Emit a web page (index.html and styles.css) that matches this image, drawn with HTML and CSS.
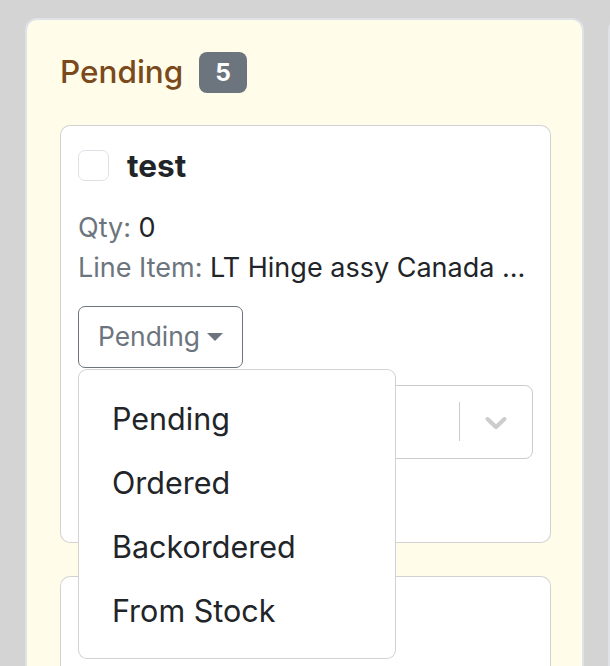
FILE: index.html
```html
<!DOCTYPE html>
<html lang="en">
<head>
    <meta charset="UTF-8">
    <meta name="viewport" content="width=device-width, initial-scale=1.0">
    <title>Parts Board</title>
    <link rel="stylesheet" href="styles.css">
</head>
<body>
    <div class="board">
        <div class="column">
            <h5 class="column-title">Pending <span class="badge">5</span></h5>

            <div class="card">
                <div class="card-title">
                    <input type="checkbox" class="check">
                    <span>test</span>
                </div>
                <div class="info"><span class="muted">Qty:</span> 0</div>
                <div class="info"><span class="muted">Line Item:</span> LT Hinge assy Canada ...</div>

                <div class="dropdown">
                    <button type="button" class="btn-status">Pending<span class="caret"></span></button>
                    <ul class="dropdown-menu">
                        <li>Pending</li>
                        <li>Ordered</li>
                        <li>Backordered</li>
                        <li>From Stock</li>
                    </ul>
                </div>

                <div class="select">
                    <div class="select-value"></div>
                    <span class="select-sep"></span>
                    <div class="select-arrow">
                        <svg viewBox="0 0 20 20" width="36" height="36"><path d="M4.516 7.548c0.436-0.446 1.043-0.481 1.576 0l3.908 3.747 3.908-3.747c0.533-0.481 1.141-0.446 1.574 0 0.436 0.445 0.408 1.197 0 1.615-0.406 0.418-4.695 4.502-4.695 4.502-0.217 0.223-0.502 0.335-0.787 0.335s-0.57-0.112-0.789-0.335c0 0-4.287-4.084-4.695-4.502s-0.436-1.17 0-1.615z"></path></svg>
                    </div>
                </div>
            </div>

            <div class="card card-next">
                <div class="card-title">
                    <input type="checkbox" class="check">
                </div>
            </div>
        </div>

        <div class="column"></div>
    </div>
</body>
</html>
```

FILE: styles.css
```css
* {
    box-sizing: border-box;
}
body {
    margin: 0;
    padding: 0;
    background-color: #d4d4d4;
    font-family: Inter, "Liberation Sans", sans-serif;
    font-size: 27px;
    line-height: 1.5;
    color: #212529;
    overflow: hidden;
    height: 666px;
}
.board {
    display: flex;
    gap: 24px;
    padding: 18px 0 0 25px;
}
.column {
    flex: 0 0 559px;
    background: #fffdea;
    border: 2px solid #dfe2e7;
    border-radius: 12px;
    padding: 32px 31px 32px 33px;
    min-height: 900px;
}
.column-title {
    margin: 0 0 32px;
    font-size: 31.5px;
    font-weight: 500;
    line-height: 39.6px;
    color: #7a4a1c;
    display: flex;
    align-items: center;
}
.badge {
    margin-left: 16px;
    padding: 8px 16px;
    font-size: 24.5px;
    font-weight: 700;
    line-height: 1;
    color: #fff;
    background: #6c757d;
    border-radius: 8px;
}
.card {
    background: #fff;
    border: 1px solid rgba(0, 0, 0, 0.175);
    border-radius: 10px;
    padding: 20px 17px 20px;
    margin-bottom: 33px;
}
.card-next {
    min-height: 200px;
}
.card-title {
    display: flex;
    align-items: center;
    gap: 18px;
    font-size: 31.5px;
    font-weight: 700;
    line-height: 39.6px;
    margin-bottom: 23px;
}
.check {
    appearance: none;
    margin: 0;
    width: 31px;
    height: 31px;
    border: 1px solid #dee2e6;
    border-radius: 7px;
    background: #fff;
}
.info {
    line-height: 39.6px;
}
.muted {
    color: #6c757d;
}
.dropdown {
    position: relative;
    margin-top: 19px;
}
.btn-status {
    font-family: inherit;
    font-size: 26.4px;
    line-height: 39.6px;
    padding: 9.9px 19px;
    color: #6c757d;
    background: transparent;
    border: 1px solid #6c757d;
    border-radius: 7px;
    display: inline-flex;
    align-items: center;
}
.caret {
    margin-left: 7px;
    border-top: 8px solid;
    border-left: 8px solid transparent;
    border-right: 8px solid transparent;
}
.dropdown-menu {
    position: absolute;
    top: 63px;
    left: 0;
    z-index: 10;
    width: 318px;
    margin: 0;
    padding: 17px 0 15px;
    list-style: none;
    background: #fff;
    border: 1px solid rgba(0, 0, 0, 0.175);
    border-radius: 9px;
}
.dropdown-menu li {
    padding: 0 33px;
    font-size: 30.5px;
    line-height: 64px;
}
.select {
    display: flex;
    align-items: center;
    height: 74px;
    margin-top: 17px;
    margin-bottom: 63px;
    border: 1px solid #ccc;
    border-radius: 8px;
}
.select-value {
    flex: 1;
}
.select-sep {
    width: 1px;
    height: 39px;
    background: #ccc;
}
.select-arrow {
    display: flex;
    padding: 0 18px;
    fill: #ccc;
}
```
